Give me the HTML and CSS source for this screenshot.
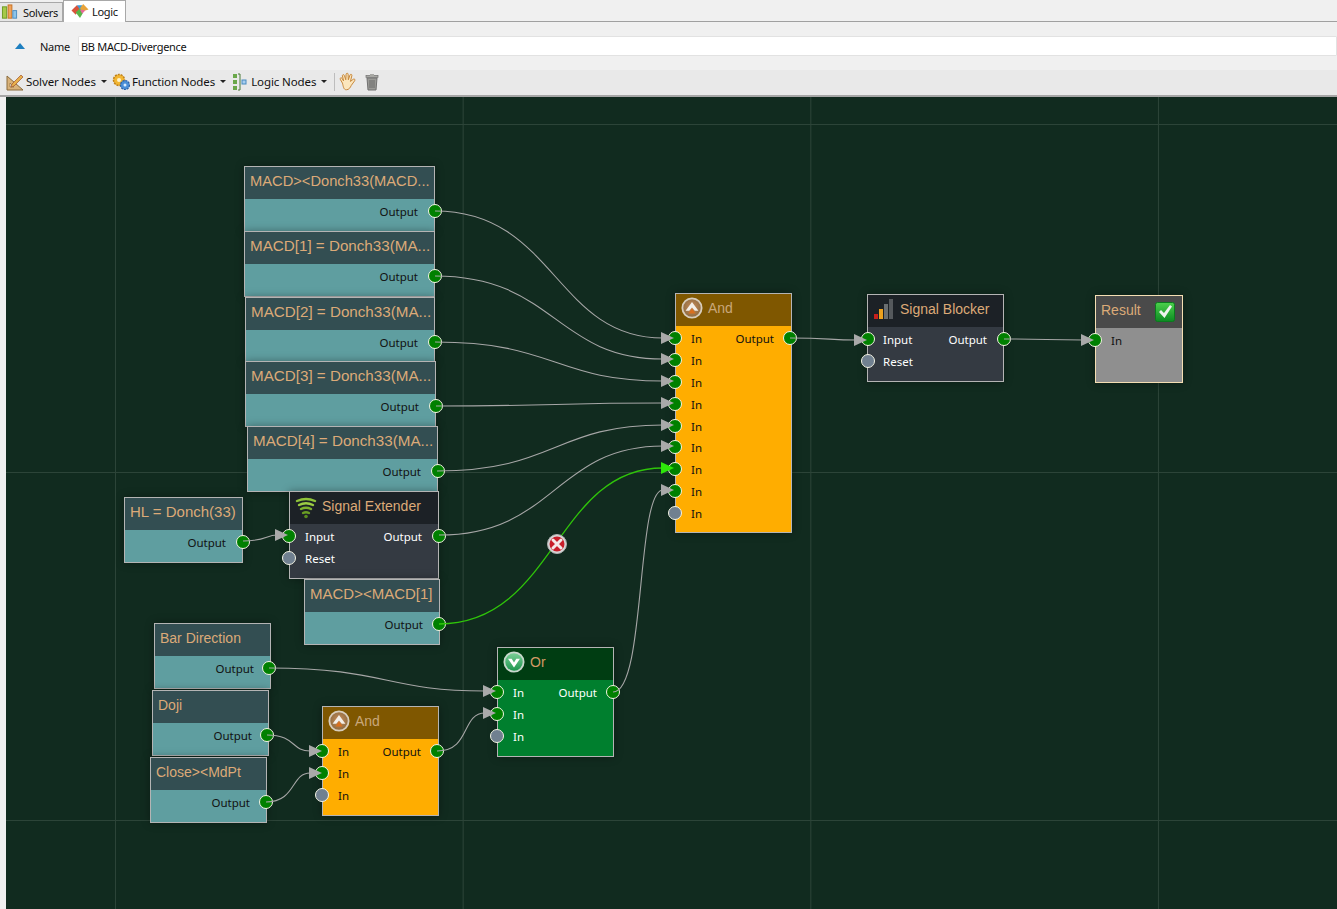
FILE: index.html
```html
<!DOCTYPE html>
<html lang="en">
<head>
<meta charset="utf-8">
<title>Logic</title>
<link rel="stylesheet" href="styles.css">
</head>
<body>
<svg class="defs" width="0" height="0" aria-hidden="true">
  <defs>
    <radialGradient id="andGrad" cx="50%" cy="45%" r="55%"><stop offset="0" stop-color="#c98d5a"/><stop offset="1" stop-color="#8a6a40"/></radialGradient>
    <linearGradient id="orGrad" x1="0" y1="0" x2="0" y2="1"><stop offset="0" stop-color="#7fd29a"/><stop offset="1" stop-color="#18924a"/></linearGradient>
    <linearGradient id="chkGrad" x1="0" y1="0" x2="0" y2="1"><stop offset="0" stop-color="#4cd04c"/><stop offset="1" stop-color="#0c8a22"/></linearGradient>
    <symbol id="and-icon" viewBox="0 0 24 24">
      <circle cx="12" cy="12" r="10.5" fill="url(#andGrad)" stroke="#d8cdbb" stroke-width="2"/>
      <path d="M12 5.5 19 15h-4l-3-3.5L9 15H5z" fill="#f3efe8"/>
      <path d="M12 12.5 16 18H8z" fill="#d9701f"/>
    </symbol>
    <symbol id="or-icon" viewBox="0 0 24 24">
      <circle cx="12" cy="12" r="10.5" fill="url(#orGrad)" stroke="#c9d8cd" stroke-width="2"/>
      <path d="M5.5 8.500h4l2.500 4 2.500-4h4L12 18z" fill="#fff"/>
    </symbol>
  </defs>
</svg>

<nav class="tabs">
  <div class="tab tab-solvers">
    <svg class="tab-icon" viewBox="0 0 18 18"><rect x="1" y="3" width="4.500" height="12" fill="#a5c94a" stroke="#6c9a20"/><rect x="7" y="1" width="4" height="14" fill="#f0a35a" stroke="#c87020"/><rect x="12" y="7" width="4" height="8" fill="#8cc4ea" stroke="#4a8cc0"/></svg>
    <span>Solvers</span>
  </div>
  <div class="tab tab-logic">
    <svg class="tab-icon" viewBox="0 0 18 16"><path d="M1 7 6 2l3 3-4 6z" fill="#d9533a"/><path d="M6 2h5l1 3-3 1z" fill="#3f9bd8"/><path d="M12 1l5 5-6 2-2-3z" fill="#e8a43a"/><path d="M5 9l4-4 3 4-3 5z" fill="#58b548"/><path d="M9 6l5 1-3 3z" fill="#e86a9a"/></svg>
    <span>Logic</span>
  </div>
  <div class="tab-rest"></div>
</nav>

<div class="name-row">
  <svg class="collapse" viewBox="0 0 10 6"><path d="M5 0 10 6H0z" fill="#1e7fc0"/></svg>
  <label class="name-label" for="nm">Name</label>
  <input id="nm" class="name-input" value="BB MACD-Divergence">
</div>

<div class="toolbar">
  <button class="tool">
    <svg class="tool-icon" viewBox="0 0 18 18"><path d="M1 3v14h16z" fill="#d9b27a" stroke="#8a6a3a"/><path d="M4 10v4h4z" fill="#f0f0f0" stroke="#8a6a3a" stroke-width=".7"/><path d="M6 11 15 2l2 2-9 9-3 1z" fill="#e8b04a" stroke="#a0522d" stroke-width=".7"/></svg>
    <span>Solver Nodes</span><i class="caret"></i>
  </button>
  <button class="tool">
    <svg class="tool-icon" viewBox="0 0 18 18"><circle cx="7" cy="7" r="5.500" fill="#f2b632" stroke="#c08016" stroke-width="1.500" stroke-dasharray="2 1"/><circle cx="7" cy="7" r="2" fill="#fff3c8"/><circle cx="13" cy="12" r="4.500" fill="#4a8fd8" stroke="#2a60a8" stroke-width="1.200" stroke-dasharray="2 1"/><circle cx="13" cy="12" r="1.500" fill="#d8ecff"/></svg>
    <span>Function Nodes</span><i class="caret"></i>
  </button>
  <button class="tool">
    <svg class="tool-icon" viewBox="0 0 18 18"><rect x="2" y="1" width="4" height="4" fill="#6aa84a"/><rect x="2" y="7" width="4" height="4" fill="#6aa84a"/><rect x="2" y="13" width="4" height="4" fill="#6aa84a"/><path d="M7 1h2v16H7" fill="none" stroke="#4a7a3a"/><rect x="11" y="7" width="4" height="4" fill="#a8cdf0" stroke="#4a8cc0"/></svg>
    <span>Logic Nodes</span><i class="caret"></i>
  </button>
  <span class="tool-sep"></span>
  <svg class="tool-glyph hand" viewBox="0 0 18 18"><path d="M4 10 2 6.500c-.5-1 1-1.800 1.600-.8L5 8 4 3.500c-.3-1.200 1.400-1.600 1.700-.4L7 7l.3-5c.1-1.200 1.800-1.200 1.800 0L9.300 7l1.500-4.300c.4-1.100 2-.6 1.700.5L11.200 8.500l2.600-2c1-.7 2 .5 1.200 1.400L12 12c-1 2-2 4-4.500 4S4.800 13 4 10z" fill="#fbe6bd" stroke="#c8883a" stroke-width=".9"/></svg>
  <svg class="tool-glyph" viewBox="0 0 18 18"><path d="M4 5h10l-1 12H5z" fill="#9a9a96" stroke="#707070"/><rect x="3" y="2.500" width="12" height="2" fill="#a8a8a4" stroke="#707070" stroke-width=".7"/><rect x="7" y="1" width="4" height="2" fill="#a8a8a4"/><path d="M7 7v8M9 7v8M11 7v8" stroke="#6a6a6a"/></svg>
</div>

<main class="canvas">
  <article class="node teal n1">
    <header class="head"><span class="title">MACD&gt;&lt;Donch33(MACD...</span></header>
    <div class="body"><div class="row"><span></span><span class="out">Output<i class="port"></i></span></div></div>
  </article>
  <article class="node teal n2">
    <header class="head"><span class="title caps">MACD[1] = Donch33(MA...</span></header>
    <div class="body"><div class="row"><span></span><span class="out">Output<i class="port"></i></span></div></div>
  </article>
  <article class="node teal n3">
    <header class="head"><span class="title caps">MACD[2] = Donch33(MA...</span></header>
    <div class="body"><div class="row"><span></span><span class="out">Output<i class="port"></i></span></div></div>
  </article>
  <article class="node teal n4">
    <header class="head"><span class="title caps">MACD[3] = Donch33(MA...</span></header>
    <div class="body"><div class="row"><span></span><span class="out">Output<i class="port"></i></span></div></div>
  </article>
  <article class="node teal n5">
    <header class="head"><span class="title caps">MACD[4] = Donch33(MA...</span></header>
    <div class="body"><div class="row"><span></span><span class="out">Output<i class="port"></i></span></div></div>
  </article>
  <article class="node teal n6">
    <header class="head"><span class="title caps">HL = Donch(33)</span></header>
    <div class="body"><div class="row"><span></span><span class="out">Output<i class="port"></i></span></div></div>
  </article>
  <article class="node dark n7">
    <header class="head">
      <svg class="head-icon low" viewBox="0 0 22 22"><g fill="none" stroke-linecap="round"><path d="M2 4q9-4 18 0" stroke="#8fc43a" stroke-width="2.400"/><path d="M4 8q7-3.500 14 0" stroke="#9ccc44" stroke-width="2.400"/><path d="M6 12q5-2.500 10 0" stroke="#7eb22e" stroke-width="2.400"/><path d="M8 16q3-1.500 6 0" stroke="#6a9e24" stroke-width="2.400"/></g><circle cx="11" cy="19.500" r="1.800" fill="#5a8e1e"/></svg>
      <span class="title">Signal Extender</span>
    </header>
    <div class="body">
      <div class="row"><span class="in">Input<i class="port"></i></span><span class="out">Output<i class="port"></i></span></div>
      <div class="row"><span class="in">Reset<i class="port off"></i></span></div>
    </div>
  </article>
  <article class="node teal n8">
    <header class="head"><span class="title caps">MACD&gt;&lt;MACD[1]</span></header>
    <div class="body"><div class="row"><span></span><span class="out">Output<i class="port"></i></span></div></div>
  </article>
  <article class="node teal n9">
    <header class="head"><span class="title">Bar Direction</span></header>
    <div class="body"><div class="row"><span></span><span class="out">Output<i class="port"></i></span></div></div>
  </article>
  <article class="node teal n10">
    <header class="head"><span class="title">Doji</span></header>
    <div class="body"><div class="row"><span></span><span class="out">Output<i class="port"></i></span></div></div>
  </article>
  <article class="node teal n11">
    <header class="head"><span class="title">Close&gt;&lt;MdPt</span></header>
    <div class="body"><div class="row"><span></span><span class="out">Output<i class="port"></i></span></div></div>
  </article>
  <article class="node amber n12">
    <header class="head"><svg class="head-icon"><use href="#and-icon"/></svg><span class="title">And</span></header>
    <div class="body">
      <div class="row"><span class="in">In<i class="port"></i></span><span class="out">Output<i class="port"></i></span></div>
      <div class="row"><span class="in">In<i class="port"></i></span></div>
      <div class="row"><span class="in">In<i class="port off"></i></span></div>
    </div>
  </article>
  <article class="node green n13">
    <header class="head"><svg class="head-icon"><use href="#or-icon"/></svg><span class="title">Or</span></header>
    <div class="body">
      <div class="row"><span class="in">In<i class="port"></i></span><span class="out">Output<i class="port"></i></span></div>
      <div class="row"><span class="in">In<i class="port"></i></span></div>
      <div class="row"><span class="in">In<i class="port off"></i></span></div>
    </div>
  </article>
  <article class="node amber n14">
    <header class="head"><svg class="head-icon"><use href="#and-icon"/></svg><span class="title">And</span></header>
    <div class="body">
      <div class="row"><span class="in">In<i class="port"></i></span><span class="out">Output<i class="port"></i></span></div>
      <div class="row"><span class="in">In<i class="port"></i></span></div>
      <div class="row"><span class="in">In<i class="port"></i></span></div>
      <div class="row"><span class="in">In<i class="port"></i></span></div>
      <div class="row"><span class="in">In<i class="port"></i></span></div>
      <div class="row"><span class="in">In<i class="port"></i></span></div>
      <div class="row"><span class="in">In<i class="port"></i></span></div>
      <div class="row"><span class="in">In<i class="port"></i></span></div>
      <div class="row"><span class="in">In<i class="port off"></i></span></div>
    </div>
  </article>
  <article class="node dark n15">
    <header class="head">
      <svg class="head-icon" viewBox="0 0 22 22"><rect x="1" y="16" width="4" height="5" fill="#c8201c"/><rect x="6" y="11" width="4" height="10" fill="#eca11e"/><rect x="11" y="6" width="4" height="15" fill="#6a6e70"/><rect x="16" y="1" width="4" height="20" fill="#55595c"/></svg>
      <span class="title">Signal Blocker</span>
    </header>
    <div class="body">
      <div class="row"><span class="in">Input<i class="port"></i></span><span class="out">Output<i class="port"></i></span></div>
      <div class="row"><span class="in">Reset<i class="port off"></i></span></div>
    </div>
  </article>
  <article class="node result n16">
    <header class="head head-between">
      <span class="title">Result</span>
      <svg class="check low" viewBox="0 0 20 20"><rect x=".5" y=".5" width="19" height="19" rx="2" fill="url(#chkGrad)" stroke="#0a7a1e"/><path d="M4 10l2-2 3 3 6-8 2 1.500L9.500 16z" fill="#eef3ee"/></svg>
    </header>
    <div class="body">
      <div class="row"><span class="in">In<i class="port"></i></span></div>
    </div>
  </article>

  <svg class="wires" viewBox="0 0 1331 812">
    <g class="wire">
      <path d="M429 114C549 114 549 241 657 241"/>
      <path d="M429 179C549 179 549 262 657 262"/>
      <path d="M429 245C549 245 549 284 657 284"/>
      <path d="M430 309C549 309 549 306 657 306"/>
      <path d="M431 374C549 374 549 328 657 328"/>
      <path d="M433 438C549 438 549 349 657 349"/>
      <path d="M607 595C640 595 630 393 657 393"/>
      <path d="M237 444C260 444 260 438 271 438"/>
      <path d="M784 241C823 241 823 243 850 243"/>
      <path d="M998 242C1040 242 1040 243 1077 243"/>
      <path d="M263 571C380 571 380 594 479 594"/>
      <path d="M261 638C290 638 285 654 304 654"/>
      <path d="M260 705C290 705 285 676 304 676"/>
      <path d="M431 654C465 654 455 616 479 616"/>
    </g>
    <path class="wire-on" d="M433 527C549 527 549 371 657 371"/>
    <g class="arrow">
      <path d="M655 235 668 241 655 247z"/>
      <path d="M655 256 668 262 655 268z"/>
      <path d="M655 278 668 284 655 290z"/>
      <path d="M655 300 668 306 655 312z"/>
      <path d="M655 322 668 328 655 334z"/>
      <path d="M655 343 668 349 655 355z"/>
      <path d="M655 387 668 393 655 399z"/>
      <path d="M269 432 282 438 269 444z"/>
      <path d="M848 237 861 243 848 249z"/>
      <path d="M1075 237 1088 243 1075 249z"/>
      <path d="M477 588 490 594 477 600z"/>
      <path d="M477 610 490 616 477 622z"/>
      <path d="M303 648 316 654 303 660z"/>
      <path d="M303 670 316 676 303 682z"/>
    </g>
    <path class="arrow-on" d="M655 365 668 371 655 377z"/>
    <g class="cancel">
      <circle cx="551" cy="447" r="9.500" fill="#d8d8d8" stroke="#b0b0b0"/>
      <circle cx="551" cy="447" r="7.500" fill="#c81e2a"/>
      <path d="M547 443l8 8M555 443l-8 8" stroke="#f4e8e8" stroke-width="3" stroke-linecap="round"/>
    </g>
  </svg>
</main>
</body>
</html>
```
FILE: styles.css
```css
* { box-sizing: border-box; }
html, body { margin: 0; height: 100%; }
body {
  display: flex;
  flex-direction: column;
  height: 909px;
  overflow: hidden;
  background: #f0f0f0;
  font-family: "Noto Sans", "Open Sans", sans-serif;
  font-size: 11.5px;
  color: #111;
}
.defs { position: absolute; }

.tabs { display: flex; height: 22px; flex: none; align-items: flex-end; font-size: 11px; letter-spacing: -.3px; }
.tab { display: flex; align-items: center; }
.tab-icon { width: 20px; height: 17px; flex: none; }
.tab-solvers { width: 63px; height: 20px; background: #e6e6e6; border: 1px solid #a8a8a8; border-left: 0; padding-left: 0; gap: 3px; }
.tab-logic { width: 63px; height: 22px; background: #fff; border: 1px solid #a8a8a8; border-bottom: 0; padding-left: 6px; gap: 2px; }
.tab-rest { flex: 1; height: 1px; background: #a0a0a0; }

.name-row { display: flex; align-items: center; height: 48px; flex: none; padding-left: 15px; font-size: 11px; letter-spacing: -.3px; }
.collapse { width: 10px; height: 6px; flex: none; }
.name-label { margin-left: 15px; width: 38px; flex: none; }
.name-input {
  flex: 1;
  height: 20px;
  border: 1px solid #e2e2e2;
  background: #fff;
  font: inherit;
  letter-spacing: inherit;
  color: #111;
  padding: 0 2px;
  border-radius: 1px;
  outline: 0;
}

.toolbar { display: flex; align-items: center; height: 27px; flex: none; padding: 0 0 2px 6px; background: #e9e9e9; border-bottom: 2px solid #a6a6a6; letter-spacing: -.1px; }
.tool { display: flex; align-items: center; gap: 2px; border: 0; background: none; padding: 0; margin-right: 5px; font: inherit; letter-spacing: inherit; color: #111; }
.tool-icon { width: 18px; height: 18px; flex: none; }
.caret { display: block; width: 0; height: 0; margin-left: 3px; border-left: 3px solid transparent; border-right: 3px solid transparent; border-top: 3px solid #222; }
.tool-sep { width: 1px; height: 18px; background: #bdbdbd; margin: 0 0 0 2px; }
.tool-glyph { width: 18px; height: 18px; margin: 0 0 0 5px; flex: none; }
.hand { width: 20px; height: 20px; margin-left: 3px; }

.canvas {
  position: relative;
  flex: 1;
  margin-left: 6px;
  background-color: #112b1f;
  overflow: hidden;
}
.canvas::before {
  content: "";
  position: absolute;
  inset: 0;
  background-image:
    linear-gradient(90deg, #2c4438 1px, transparent 1px),
    linear-gradient(#2c4438 1px, transparent 1px);
  background-size: 347.67px 100%, 100% 348px;
  background-position: 109px 0, 0 27px;
}

.node {
  position: absolute;
  display: flex;
  flex-direction: column;
  border: 1px solid #b4b4b4;
  box-shadow: 0 0 8px rgba(0, 0, 0, .35);
}
.head { display: flex; align-items: center; height: 32px; flex: none; padding: 0 0 4px 5px; gap: 5px; }
.head-between { justify-content: space-between; padding-right: 7px; }
.title { font-family: "Liberation Sans", Arial, sans-serif; font-size: 14px; line-height: 26px; color: #dcaa78; white-space: nowrap; }
.caps { font-size: 15.2px; }
.n1 .title { font-size: 14.7px; }
.n6 .title, .n8 .title { font-size: 15px; }
.head-icon { width: 22px; height: 22px; flex: none; }
.check { width: 20px; height: 20px; flex: none; }
.low { margin-top: 4px; }
.body { flex: 1; padding: 2px 16px 0 15px; }
.row { display: flex; justify-content: space-between; align-items: center; height: 21.8px; }
.in, .out { position: relative; display: block; }
.port {
  position: absolute;
  top: 50%;
  width: 14px;
  height: 14px;
  margin-top: -7.5px;
  border-radius: 50%;
  background: #008000;
  border: 1px solid #f4f4e4;
}
.in .port { left: -23px; }
.out .port { right: -24px; }
.port.off { background: #708090; }

.teal .head { background: #334e52; }
.teal .body { background: #5f9ea0; }
.dark .head { background: #1c2126; }
.dark .body { background: #343a42; color: #fff; }
.amber .head { background: #7f5700; }
.amber .body { background: #ffad00; padding-right: 17px; }
.amber .title { color: #c9a77a; }
.amber .out .port { right: -23px; }
.green .head { background: #003d12; }
.green .body { background: #007f2e; color: #fff; }
.green .title { color: #d29a66; }
.green .out .port { right: -23px; }
.result { border-color: #f5deb3; }
.result .head { background: #4a4a4a; }
.result .body { background: #8f8f8f; }

.n1 { left: 238px; top: 69px; width: 191px; height: 66px; }
.n2 { left: 238px; top: 134px; width: 191px; height: 66px; }
.n3 { left: 239px; top: 200px; width: 190px; height: 66px; }
.n4 { left: 239px; top: 264px; width: 191px; height: 66px; }
.n5 { left: 241px; top: 329px; width: 191px; height: 66px; }
.n6 { left: 118px; top: 400px; width: 119px; height: 66px; }
.n7 { left: 283px; top: 394px; width: 150px; height: 88px; }
.n8 { left: 298px; top: 482px; width: 136px; height: 66px; }
.n8 .out .port { right: -23px; }
.n9 { left: 148px; top: 526px; width: 117px; height: 66px; }
.n9 .out .port { right: -22px; }
.n10 { left: 146px; top: 593px; width: 117px; height: 66px; }
.n10 .out .port { right: -22px; }
.n11 { left: 144px; top: 660px; width: 117px; height: 66px; }
.n11 .out .port { right: -23px; }
.n12 { left: 316px; top: 609px; width: 117px; height: 110px; }
.n13 { left: 491px; top: 550px; width: 117px; height: 110px; }
.n14 { left: 669px; top: 196px; width: 117px; height: 240px; }
.n15 { left: 861px; top: 197px; width: 137px; height: 88px; }
.n15 .in .port { left: -22px; }
.n16 { left: 1089px; top: 198px; width: 88px; height: 88px; }

.wires { position: absolute; left: 0; top: 0; width: 1331px; height: 812px; pointer-events: none; }
.wire path { fill: none; stroke: #a6a6a6; stroke-width: 1.100; }
.wire-on { fill: none; stroke: #2fc40a; stroke-width: 1.300; }
.arrow path { fill: #a9a9a9; }
.arrow-on { fill: #2ee60a; }
```
